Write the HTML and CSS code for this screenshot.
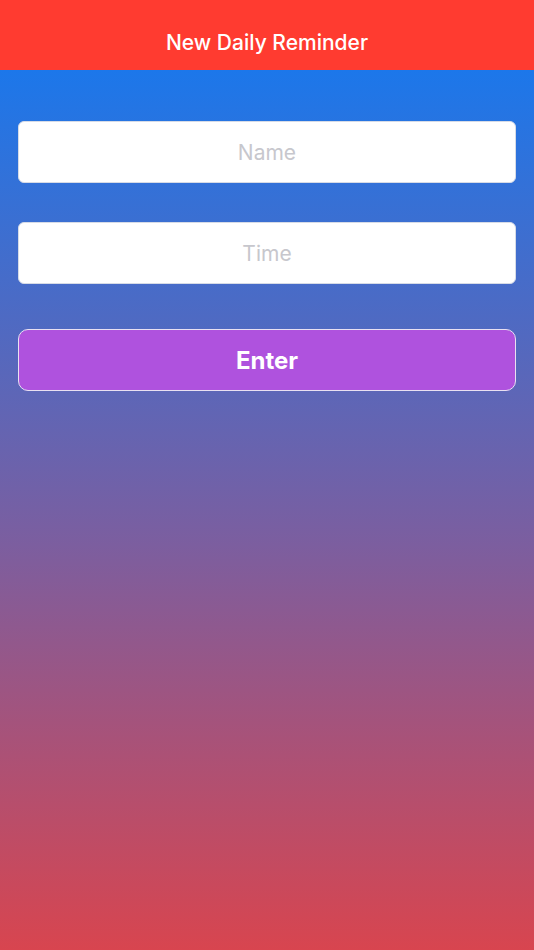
FILE: index.html
```html
<!DOCTYPE html>
<html lang="en">
<head>
  <meta charset="UTF-8">
  <meta name="viewport" content="width=device-width, initial-scale=1.0">
  <title>New Daily Reminder</title>
  <link rel="stylesheet" href="styles.css">
</head>
<body>
  <!-- Nav bar -->
  <div class="nav-bar">
    <h1 class="nav-title">New Daily Reminder</h1>
  </div>

  <!-- Reminder form -->
  <div class="content">
    <input type="text" class="field" placeholder="Name">
    <input type="text" class="field" placeholder="Time">
    <button class="enter-btn">Enter</button>
  </div>
</body>
</html>
```

FILE: styles.css
```css
body {
  font-family: Inter, "Open Sans", Roboto, sans-serif;
  margin: 0;
  height: 100vh;
  display: flex;
  flex-direction: column;
  background: #1d77ea;
}
.nav-bar {
  height: 70px;
  background: #ff3b30;
  display: flex;
  justify-content: center;
  align-items: center;
  padding-top: 14px;
  box-sizing: border-box;
}
.nav-title {
  margin: 0;
  color: white;
  font-size: 21px;
  font-weight: 500;
}
.content {
  flex: 1;
  display: flex;
  flex-direction: column;
  padding: 51px 18px 0;
  background: linear-gradient(to bottom, #1c77ea 0%, #7c5e9f 54%, #d8454f 100%);
}
.field {
  height: 62px;
  box-sizing: border-box;
  border: 1px solid #d6dbe6;
  border-radius: 6px;
  background: white;
  text-align: center;
  font-family: inherit;
  font-size: 21px;
  margin-bottom: 39px;
  outline: none;
}
.field::placeholder {
  color: #c7c7cd;
}
.enter-btn {
  height: 62px;
  margin-top: 6px;
  background: #af52de;
  color: white;
  border: 1px solid #e9e0f2;
  border-radius: 10px;
  font-family: inherit;
  font-size: 24px;
  font-weight: 700;
  cursor: pointer;
}
```
